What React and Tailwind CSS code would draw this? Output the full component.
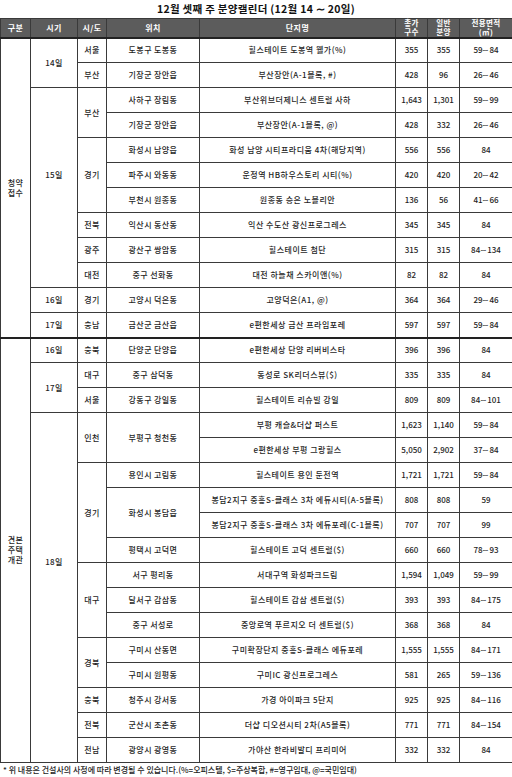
import React from 'react';

// 12월 셋째 주 분양캘린더 표
const SECTIONS = [
  {
    label: ['청약', '접수'],
    rows: [
      { sigi: '14일', sigiRs: 2, sido: '서울', loc: '도봉구 도봉동', name: '힐스테이트 도봉역 웰가(%)', total: '355', general: '355', area: '59∼84' },
      { sido: '부산', loc: '기장군 장안읍', name: '부산장안(A-1블록, #)', total: '428', general: '96', area: '26∼46' },
      { sigi: '15일', sigiRs: 8, sigiPad: 'pb-[26px]', sido: '부산', sidoRs: 2, loc: '사하구 장림동', name: '부산위브더제니스 센트럴 사하', total: '1,643', general: '1,301', area: '59∼99' },
      { loc: '기장군 장안읍', name: '부산장안(A-1블록, @)', total: '428', general: '332', area: '26∼46' },
      { sido: '경기', sidoRs: 3, loc: '화성시 남양읍', name: '화성 남양 시티프라디움 4차(해당지역)', total: '556', general: '556', area: '84' },
      { loc: '파주시 와동동', name: '운정역 HB하우스토리 시티(%)', total: '420', general: '420', area: '20∼42' },
      { loc: '부천시 원종동', name: '원종동 승은 노블리안', total: '136', general: '56', area: '41∼66' },
      { sido: '전북', loc: '익산시 동산동', name: '익산 수도산 광신프로그레스', total: '345', general: '345', area: '84' },
      { sido: '광주', loc: '광산구 쌍암동', name: '힐스테이트 첨단', total: '315', general: '315', area: '84∼134' },
      { sido: '대전', loc: '중구 선화동', name: '대전 하늘채 스카이앤(%)', total: '82', general: '82', area: '84' },
      { sigi: '16일', sido: '경기', loc: '고양시 덕은동', name: '고양덕은(A1, @)', total: '364', general: '364', area: '29∼46' },
      { sigi: '17일', sido: '충남', loc: '금산군 금산읍', name: 'e편한세상 금산 프라임포레', total: '597', general: '597', area: '59∼84' },
    ],
  },
  {
    label: ['견본', '주택', '개관'],
    rows: [
      { sigi: '16일', sido: '충북', loc: '단양군 단양읍', name: 'e편한세상 단양 리버비스타', total: '396', general: '396', area: '84' },
      { sigi: '17일', sigiRs: 2, sido: '대구', loc: '중구 삼덕동', name: '동성로 SK리더스뷰($)', total: '335', general: '335', area: '84' },
      { sido: '서울', loc: '강동구 강일동', name: '힐스테이트 리슈빌 강일', total: '809', general: '809', area: '84∼101' },
      { sigi: '18일', sigiRs: 14, sigiPad: 'pb-[52px]', sido: '인천', sidoRs: 2, loc: '부평구 청천동', locRs: 2, name: '부평 캐슬&더샵 퍼스트', total: '1,623', general: '1,140', area: '59∼84' },
      { name: 'e편한세상 부평 그랑힐스', total: '5,050', general: '2,902', area: '37∼84' },
      { sido: '경기', sidoRs: 4, loc: '용인시 고림동', name: '힐스테이트 용인 둔전역', total: '1,721', general: '1,721', area: '59∼84' },
      { loc: '화성시 봉담읍', locRs: 2, name: '봉담2지구 중흥S-클래스 3차 에듀시티(A-5블록)', total: '808', general: '808', area: '59' },
      { name: '봉담2지구 중흥S-클래스 3차 에듀포레(C-1블록)', total: '707', general: '707', area: '99' },
      { loc: '평택시 고덕면', name: '힐스테이트 고덕 센트럴($)', total: '660', general: '660', area: '78∼93' },
      { sido: '대구', sidoRs: 3, loc: '서구 평리동', name: '서대구역 화성파크드림', total: '1,594', general: '1,049', area: '59∼99' },
      { loc: '달서구 감삼동', name: '힐스테이트 감삼 센트럴($)', total: '393', general: '393', area: '84∼175' },
      { loc: '중구 서성로', name: '중앙로역 푸르지오 더 센트럴($)', total: '368', general: '368', area: '84' },
      { sido: '경북', sidoRs: 2, loc: '구미시 산동면', name: '구미확장단지 중흥S-클래스 에듀포레', total: '1,555', general: '1,555', area: '84∼171' },
      { loc: '구미시 원평동', name: '구미IC 광신프로그레스', total: '581', general: '265', area: '59∼136' },
      { sido: '충북', loc: '청주시 강서동', name: '가경 아이파크 5단지', total: '925', general: '925', area: '84∼116' },
      { sido: '전북', loc: '군산시 조촌동', name: '더샵 디오션시티 2차(A5블록)', total: '771', general: '771', area: '84∼154' },
      { sido: '전남', loc: '광양시 광영동', name: '가야산 한라비발디 프리미어', total: '332', general: '332', area: '84' },
    ],
  },
];

const td = 'border border-[#3a3a3a] text-center align-middle p-0';

export default function App() {
  return (
    <div
      className="w-[512px] h-[777px] bg-white text-[#1e1e1e] overflow-hidden"
      style={{ fontFamily: '"Noto Sans CJK KR", "Noto Sans", sans-serif' }}
    >
      {/* 제목 */}
      <div className="h-[18px] flex items-center justify-center text-[10.5px] font-bold tracking-[0.3px] text-[#111]">
        12월 셋째 주 분양캘린더 (12월 14 ∼ 20일)
      </div>

      <table className="w-[512px] table-fixed border-collapse text-[8px] font-medium leading-[10px] tracking-[0.4px]">
        <colgroup>
          <col className="w-[30px]" />
          <col className="w-[47px]" />
          <col className="w-[29px]" />
          <col className="w-[93px]" />
          <col className="w-[196px]" />
          <col className="w-[32px]" />
          <col className="w-[32px]" />
          <col className="w-[53px]" />
        </colgroup>
        <thead>
          <tr className="h-[19px] bg-[#5c5c5c] text-white">
            <th className={`${td} font-bold`}>구분</th>
            <th className={`${td} font-bold`}>시기</th>
            <th className={`${td} font-bold`}>시/도</th>
            <th className={`${td} font-bold`}>위치</th>
            <th className={`${td} font-bold`}>단지명</th>
            <th className={`${td} font-bold text-[7.5px] leading-[8.5px]`}>총가<br />구수</th>
            <th className={`${td} font-bold text-[7.5px] leading-[8.5px]`}>일반<br />분양</th>
            <th className={`${td} font-bold text-[7.5px] leading-[8.5px]`}>전용면적<br />(㎡)</th>
          </tr>
        </thead>
        {SECTIONS.map((sec, si) => (
          <tbody key={si} className="border-t-2 border-[#222]">
            {sec.rows.map((r, ri) => (
              <tr key={ri} className="h-[25px]">
                {ri === 0 && (
                  <td rowSpan={sec.rows.length} className={`${td} leading-[10px]`}>
                    {sec.label.map((l) => (
                      <div key={l}>{l}</div>
                    ))}
                  </td>
                )}
                {r.sigi && (
                  <td rowSpan={r.sigiRs || 1} className={td}>
                    <div className={r.sigiPad || ''}>{r.sigi}</div>
                  </td>
                )}
                {r.sido && (
                  <td rowSpan={r.sidoRs || 1} className={td}>{r.sido}</td>
                )}
                {r.loc && (
                  <td rowSpan={r.locRs || 1} className={td}>{r.loc}</td>
                )}
                <td className={`${td} whitespace-nowrap tracking-[0.5px]`}>{r.name}</td>
                <td className={`${td} tracking-normal`}>{r.total}</td>
                <td className={`${td} tracking-normal`}>{r.general}</td>
                <td className={`${td} tracking-normal`}>{r.area}</td>
              </tr>
            ))}
          </tbody>
        ))}
      </table>

      {/* 하단 주석 */}
      <div className="pl-[3px] pt-[2px] text-[8px] font-medium text-[#222] leading-[10px] whitespace-nowrap">
        * 위 내용은 건설사의 사정에 따라 변경될 수 있습니다.(%=오피스텔, $=주상복합, #=영구임대, @=국민임대)
      </div>
    </div>
  );
}
